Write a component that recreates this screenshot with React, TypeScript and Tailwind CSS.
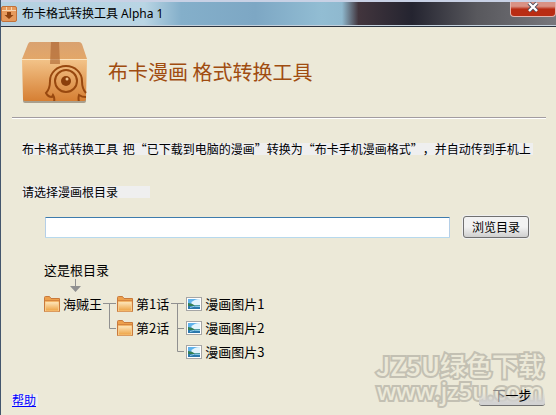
import type { ReactNode } from "react";

function BoxLogo() {
  return (
    <svg className="h-[62px] w-[67px] shrink-0" viewBox="0 0 67 62" fill="none">
      <defs>
        <linearGradient id="boxFront" x1="0" y1="0" x2="0" y2="1">
          <stop offset="0" stopColor="#f3c48a" />
          <stop offset="1" stopColor="#d67f33" />
        </linearGradient>
        <linearGradient id="boxTop" x1="0" y1="0" x2="0" y2="1">
          <stop offset="0" stopColor="#d9a271" />
          <stop offset="1" stopColor="#e3a768" />
        </linearGradient>
        <clipPath id="boxClip">
          <path d="M1 18h65v40q0 2-2 2H4q-2 0-2-2z" />
        </clipPath>
      </defs>
      <path d="M2 57h63v3q0 2-2 2H4q-2 0-2-2z" fill="#a99f8d" />
      <path d="M9 1h49q2 0 3 2l5 15H1L7 3q1-2 2-2z" fill="url(#boxTop)" />
      <path d="M1 18h65l-1 40q0 2-2 2H4q-2 0-2-2z" fill="url(#boxFront)" />
      <path d="M1 18.5h65" stroke="#fbe3bd" />
      <path d="M30 1h8l1 22H29z" fill="#a9602e" fillOpacity=".6" />
      <g clipPath="url(#boxClip)" stroke="#98480f" strokeWidth="2">
        <path d="M33 61q1-4-1-7l-1 2q-4 0-6-4q4-4 4-12a16 15 0 0 1 32 0q0 8 4 12" />
        <path d="M58 61q-1-4 0-7q3 2 7 2" />
        <circle cx="45" cy="40" r="11" />
      </g>
      <circle cx="45" cy="40" r="5" fill="#8b3f0b" />
      <circle cx="46" cy="38" r="1.5" fill="#f1c18b" />
    </svg>
  );
}

function AppIcon() {
  return (
    <svg className="h-4 w-4 shrink-0" viewBox="0 0 16 16">
      <rect x=".5" y=".5" width="15" height="15" rx="1.5" fill="#e69a5c" stroke="#c0713a" />
      <path d="M1 4.5h14M5.5 1v3M10.5 1v3" stroke="#f8d5ae" />
      <path d="M6 6h4v3h2.500L8 13 3.500 9H6z" fill="#8d4210" />
    </svg>
  );
}

function FolderIcon() {
  return (
    <svg className="h-4 w-4 shrink-0" viewBox="0 0 16 16">
      <defs>
        <linearGradient id="folderFront" x1="0" y1="0" x2="0" y2="1">
          <stop offset="0" stopColor="#fde6bb" />
          <stop offset="1" stopColor="#eda142" />
        </linearGradient>
      </defs>
      <path d="M.5 15.500V1.500q0-1 1-1h4l1.500 2h8.500v13z" fill="#eda04c" stroke="#c97a3c" />
      <path d="M1 4.500h14" stroke="#d5853f" />
      <rect x="1.500" y="6" width="13" height="9" fill="url(#folderFront)" stroke="#fbd9a0" strokeWidth=".7" />
    </svg>
  );
}

function PictureIcon() {
  return (
    <svg className="h-4 w-4 shrink-0" viewBox="0 0 16 16">
      <rect x=".5" y="1.500" width="15" height="13" fill="#fff" stroke="#a5a5a5" />
      <rect x="2" y="3" width="12" height="10" fill="#5fb2ea" />
      <path d="M5 7q3-4 9-4v6H7z" fill="#e3f4fc" />
      <path d="M2 7q4 0 7 2.500h5v1H2z" fill="#347f54" />
      <path d="M2 10h12v3H2z" fill="#2b78ac" />
      <path d="M4 11.500q4-2 10-1" stroke="#90cfe8" fill="none" />
    </svg>
  );
}

function RootArrow() {
  return (
    <svg className="ml-[26px] h-[13px] w-[11px]" viewBox="0 0 11 13">
      <path d="M5 0h1v7h5l-5.500 6L0 7h5z" fill="#909090" />
    </svg>
  );
}

function Node({ icon, children }: { icon: ReactNode; children: ReactNode }) {
  return (
    <li className="flex h-6 items-center gap-[3px] whitespace-nowrap">
      {icon}
      <span>{children}</span>
    </li>
  );
}

// Connector between two tree levels, one branch for each child row
function Branch({ rows }: { rows: 2 | 3 }) {
  return (
    <svg
      className={rows === 2 ? "mx-px h-12 w-[13px]" : "mx-0.5 h-[72px] w-[13px]"}
      viewBox={rows === 2 ? "0 0 13 48" : "0 0 13 72"}
      fill="none"
      stroke="#909090"
    >
      {rows === 2 ? (
        <path d="M0 11.500h13M6.500 11v25.500H13" />
      ) : (
        <path d="M0 11.500h13M6.500 11v48.500H13M6.500 36.500H13" />
      )}
    </svg>
  );
}

export default function App() {
  return (
    <div className="relative min-h-screen overflow-hidden border-l border-[#43566d] bg-[#ece9d8] font-['Noto_Sans_CJK_SC',sans-serif] text-xs text-black [text-spacing-trim:space-all]">
      <header className="-ml-px flex h-[27px] items-start justify-between border-t-2 border-b border-t-[#c8d1e5] border-b-[#2c3540] bg-[#c3d0dc] pb-px">
        <div className="flex h-full flex-1 items-center bg-[linear-gradient(90deg,#b5d1e1_0%,#b9d5e4_35%,#84afca_44%,#7da7c4_62%,#92bdd3_78%,#8fb9cf_83%,#42353d_87%,#242430_100%)] pl-px">
          <AppIcon />
          <span className="ml-[5px] font-['Noto_Sans','Noto_Sans_CJK_SC',sans-serif] leading-4">
            布卡格式转换工具 Alpha 1
          </span>
        </div>
        <div className="flex h-full w-36 justify-end bg-[linear-gradient(90deg,#242430,#58585d_45%,#77777c)]">
          <button
            aria-label="关闭"
            className="flex h-[15px] w-[46px] items-start justify-center rounded-b-sm border border-t-0 border-[#e3b3ac] bg-linear-to-b from-[#d99285] from-30% to-[#b92c13] to-50%"
          >
            <svg className="h-2.5 w-3" viewBox="0 0 12 10">
              <path d="M2 1l8 8M10 1L2 9" stroke="#4b4d5c" strokeWidth="4" />
              <path d="M2 1l8 8M10 1L2 9" stroke="#fff" strokeWidth="2.400" />
            </svg>
          </button>
        </div>
      </header>

      <div
        aria-hidden="true"
        className="pointer-events-none absolute right-3 bottom-3 text-center text-[#ece9d8] [-webkit-text-stroke:4px_#c3c0b3] [paint-order:stroke_fill]"
      >
        <p className="text-[26px] leading-7 font-medium">JZ5U绿色下载</p>
        <p className="font-['Noto_Sans',sans-serif] text-2xl leading-6 font-medium">www.jz5u.com</p>
      </div>

      <main className="relative pr-2.5 pl-[11px]">
        <div className="flex h-[90px] items-center gap-5 pl-[9px]">
          <BoxLogo />
          <h1 className="text-xl text-[#a04c10]">布卡漫画 格式转换工具</h1>
        </div>
        <hr className="h-0.5 border-t border-b border-t-[#a29ca0] border-b-white" />

        <div className="pt-6 pl-2.5">
          <p className="w-fit bg-[#efefef] pr-0.5 leading-3 whitespace-nowrap">
            <span className="mr-0.5">布卡格式转换工具</span> 把“已下载到电脑的漫画”转换为“布卡手机漫画格式”，并自动传到手机上
          </p>
          <label htmlFor="root-dir" className="mt-[31px] block w-32 bg-[#efefef] leading-3">
            请选择漫画根目录
          </label>
        </div>

        <div className="mt-[18px] flex items-center gap-[13px] pr-[17px] pl-[33px]">
          <input
            id="root-dir"
            type="text"
            className="h-[21px] min-w-0 flex-1 rounded-[1px] border border-x-[#b5cfe7] border-t-[#3d7bad] border-b-[#b7d9ed] bg-white px-1 outline-none"
          />
          <button className="h-[22px] w-[66px] rounded-[3px] border border-[#707070] bg-linear-to-b from-[#f2f2f2] from-50% to-[#cfcfcf] leading-4 shadow-[0_0_0_1px_#efefef]">
            浏览目录
          </button>
        </div>

        <section className="mt-6 pl-8 text-[13px] leading-4">
          <p className="pb-px">这是根目录</p>
          <RootArrow />
          <div className="flex items-start">
            <ul>
              <Node icon={<FolderIcon />}>海贼王</Node>
            </ul>
            <Branch rows={2} />
            <ul>
              <Node icon={<FolderIcon />}>第1话</Node>
              <Node icon={<FolderIcon />}>第2话</Node>
            </ul>
            <Branch rows={3} />
            <ul>
              <Node icon={<PictureIcon />}>漫画图片1</Node>
              <Node icon={<PictureIcon />}>漫画图片2</Node>
              <Node icon={<PictureIcon />}>漫画图片3</Node>
            </ul>
          </div>
        </section>

        <footer className="mt-5 flex items-end justify-between pr-px">
          <a href="#help" className="bg-[#efefef] pr-0.5 leading-3 text-[#0000ff] underline">
            帮助
          </a>
          <button className="h-[22px] w-[66px] rounded-[3px] border-b border-[#707070] bg-linear-to-b from-transparent from-40% to-[#d2d2d2] to-90% text-[13px] leading-4">
            <span className="text-[#8a8a8a]">下</span>一步
          </button>
        </footer>
      </main>
    </div>
  );
}
